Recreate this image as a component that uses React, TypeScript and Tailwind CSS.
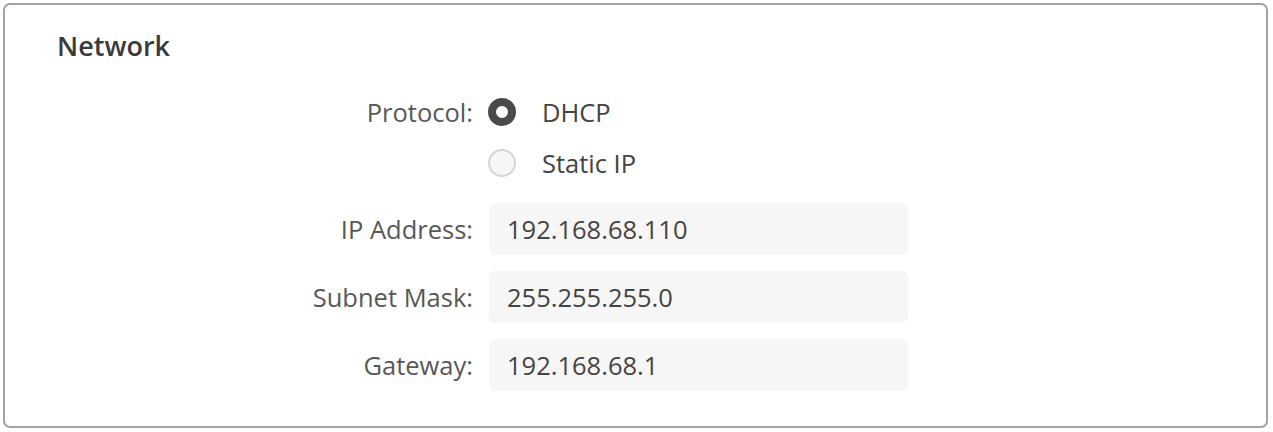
import React from "react";

const font = { fontFamily: '"Open Sans", "Noto Sans", sans-serif' };

function Field({ label, value }: { label: string; value: string }) {
  return (
    <div className="flex items-center mt-[16px] first:mt-0">
      <div className="w-[468px] text-right text-[25.5px] text-[#585858]">{label}</div>
      <div className="ml-[16px] w-[419px] h-[52px] rounded-[6px] bg-[#f7f6f6] flex items-center pl-[18px] text-[25.5px] text-[#444]">
        {value}
      </div>
    </div>
  );
}

export default function App() {
  return (
    <div className="w-[1273px] h-[432px] bg-white pt-[3px] pl-[3px]" style={font}>
      <div className="w-[1265px] h-[425px] border-2 border-[#a2a2a2] rounded-[7px] bg-white">
        <div className="pl-[52px] pt-[23px] text-[27px] font-semibold text-[#3a3a3a] leading-[36px]">Network</div>
        <div className="mt-[34px]">
          <div className="flex items-center h-[28px]">
            <div className="w-[468px] text-right text-[25.5px] text-[#585858]">Protocol:</div>
            <div className="ml-[15px] flex items-center">
              <span className="w-[28px] h-[28px] rounded-full border-[8px] border-[#4a4a4a] bg-white" />
              <span className="ml-[26px] text-[25.5px] text-[#444]">DHCP</span>
            </div>
          </div>
          <div className="flex items-center h-[28px] mt-[23px]">
            <div className="w-[468px]" />
            <div className="ml-[15px] flex items-center">
              <span className="w-[28px] h-[28px] rounded-full border-2 border-[#d6d6d6] bg-[#f6f6f6]" />
              <span className="ml-[26px] text-[25.5px] text-[#444]">Static IP</span>
            </div>
          </div>
          <div className="mt-[26px]">
            <Field label="IP Address:" value="192.168.68.110" />
            <Field label="Subnet Mask:" value="255.255.255.0" />
            <Field label="Gateway:" value="192.168.68.1" />
          </div>
        </div>
      </div>
    </div>
  );
}
